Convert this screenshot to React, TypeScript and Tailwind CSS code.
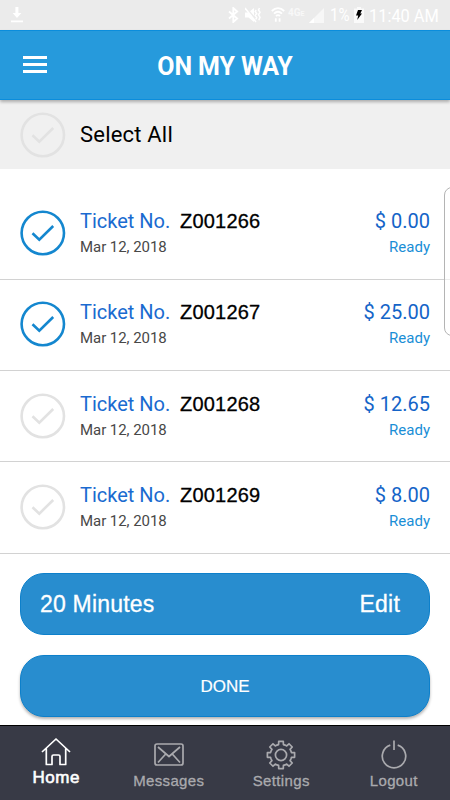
import type { ReactNode } from "react";

interface Ticket {
  id: string;
  amount: string;
  selected: boolean;
}

const tickets: Ticket[] = [
  { id: "Z001266", amount: "$ 0.00", selected: true },
  { id: "Z001267", amount: "$ 25.00", selected: true },
  { id: "Z001268", amount: "$ 12.65", selected: false },
  { id: "Z001269", amount: "$ 8.00", selected: false },
];

const helvetica = "font-['Liberation_Sans',Arial,sans-serif]";

function CheckCircle({ className }: { className: string }) {
  return (
    <svg
      className={`w-[46px] h-[46px] shrink-0 ${className}`}
      viewBox="0 0 46 46"
      fill="none"
      stroke="currentColor"
      strokeWidth="2.6"
    >
      <circle cx="22.8" cy="23" r="21.2" />
      <path d="M12.5 23.2l6.8 6.4L33.2 16" />
    </svg>
  );
}

function StatusBar() {
  return (
    <div className="h-[30px] bg-[#ebebeb] text-white flex items-center">
      <svg className="w-3 h-4 ml-[11px]" viewBox="0 0 12 16" fill="currentColor">
        <path d="M4.4 0h3v6h3L6 11 1.6 6h2.8zM0 13.5h12v1.7H0z" />
      </svg>
      <svg
        className="w-[11px] h-4 ml-[205px]"
        viewBox="0 0 11 16"
        fill="none"
        stroke="currentColor"
        strokeWidth="1.8"
      >
        <path d="M1 4.5l8.2 7L5.3 15V1l3.9 3.5-8.2 7" />
      </svg>
      <svg className="w-4 h-4 ml-[6px] shrink-0" viewBox="0 0 16 16" fill="none" stroke="currentColor">
        <path d="M0 5.5h3.5L9 1v14l-5.5-4.5H0z" fill="currentColor" stroke="none" />
        <path d="M1 1l11 13" stroke="#ebebeb" strokeWidth="2" />
        <path d="M0 1l11 14" strokeWidth="1.5" />
        <path d="M11.2 3l-1 1.5 1.5 2-1.5 2 1.5 2-1 2M14.5 1l-1 2 1.5 2.3-1.5 2.5 1.5 2.4-1.2 3" strokeWidth="1.5" />
      </svg>
      <svg className="w-[14px] h-4 ml-2.5 shrink-0" viewBox="0 0 14 16" fill="none" stroke="currentColor" strokeWidth="1.8">
        <path d="M.8 4c3.8-3.7 8.6-3.7 12.4 0M3 6.7c2.5-2.4 5.5-2.4 8 0M5 9c1.2-1.1 2.8-1.1 4 0" />
        <path d="M4.8 11.3v3.5M8.6 11.3v3.5" />
      </svg>
      <span className="ml-[3px] w-[18px] mb-1 text-[10px] leading-[10px] whitespace-nowrap font-bold text-[#f8f8f8]">
        4G<span className="text-[7px]">E</span>
      </span>
      <svg className="w-[15px] h-[15px] ml-[3px] shrink-0" viewBox="0 0 15 15">
        <path d="M0 15L15 0v15z" fill="#f7f7f7" />
        <path d="M0 15l5-5v5z" fill="#fff" />
      </svg>
      <span className="ml-[6px] w-[20px] text-[18px] leading-none whitespace-nowrap">
        <span className="inline-block origin-left scale-x-[0.84]">1%</span>
      </span>
      <svg className="w-[10px] h-4 ml-[4px] shrink-0" viewBox="0 0 10 16">
        <path d="M3 0h4v1.5h3V16H0V1.5h3z" fill="#fafafa" />
        <path d="M4 3h4L6.3 6.5H8L3.2 13l1-4.6H2z" fill="#000" />
      </svg>
      <span className="ml-[5px] mt-px text-[18px] leading-none whitespace-nowrap origin-left scale-x-[0.91]">
        11:40 AM
      </span>
    </div>
  );
}

function Header() {
  return (
    <header className="relative z-10 h-[70px] bg-[#269adc] border-y border-[#0b8ddc] shadow-[0_2px_3px_rgba(0,0,0,0.28)] grid grid-cols-[70px_1fr_70px] items-center">
      <div className="ml-[23px] -mt-px w-6 flex flex-col gap-1">
        <div className="h-[3px] bg-white" />
        <div className="h-[3px] bg-white" />
        <div className="h-[3px] bg-white" />
      </div>
      <h1 className="pt-[3px] text-center text-white font-bold text-[25px] leading-7 tracking-[-0.1px]">ON MY WAY</h1>
    </header>
  );
}

function TicketRow({ ticket }: { ticket: Ticket }) {
  return (
    <li className="h-[91.3px] border-b border-[#d2d2d2] flex items-center px-5 pb-[1.4px]">
      <CheckCircle className={ticket.selected ? "text-[#1487cf]" : "text-[#e2e2e2]"} />
      <div className="ml-[14px] flex-1">
        <div className="flex items-center h-7">
          <span className="w-[100px] text-[20px] text-[#1a6bd0]">Ticket No.</span>
          <span className={`${helvetica} text-[20px] text-black tracking-[0.2px] [-webkit-text-stroke:0.3px]`}>
            {ticket.id}
          </span>
        </div>
        <div className="h-6 leading-6 text-[15px] tracking-[-0.05px] text-[#484848]">Mar 12, 2018</div>
      </div>
      <div className="text-right">
        <div className="h-7 leading-7 text-[20px] text-[#1464c8]">{ticket.amount}</div>
        <div className="h-6 leading-6 text-[15px] text-[#1a8ed6]">Ready</div>
      </div>
    </li>
  );
}

// Outline of an eight-toothed gear centred on 15,15
function gearPath() {
  const steps = [
    [-22.5, 10.7],
    [-13, 10.7],
    [-9.5, 13.8],
    [9.5, 13.8],
    [13, 10.7],
  ];
  const points: string[] = [];
  for (let tooth = 0; tooth < 8; tooth++) {
    for (const [offset, r] of steps) {
      const a = ((tooth * 45 + offset) * Math.PI) / 180;
      points.push(`${(15 + r * Math.sin(a)).toFixed(2)} ${(15 - r * Math.cos(a)).toFixed(2)}`);
    }
  }
  return `M${points.join("L")}Z`;
}

function NavItem({ label, active = false, children }: { label: string; active?: boolean; children: ReactNode }) {
  return (
    <div className={`flex flex-col items-center ${active ? "text-white pt-3" : "text-[#aaaaae] pt-3.5"}`}>
      <svg
        className="w-[30px] h-[30px]"
        viewBox="0 0 30 30"
        fill="none"
        stroke="currentColor"
        strokeWidth="1.7"
        strokeLinejoin="round"
      >
        {children}
      </svg>
      <span
        className={`${helvetica} ${
          active
            ? "text-[17px] leading-5 tracking-[0.6px] [-webkit-text-stroke:0.6px]"
            : "mt-px text-[15px] leading-5 tracking-[0.35px] [-webkit-text-stroke:0.3px]"
        }`}
      >
        {label}
      </span>
    </div>
  );
}

function BottomNav() {
  return (
    <nav className="h-[75px] bg-[#383a46] border-t border-black grid grid-cols-4">
      <NavItem label="Home" active>
        <path d="M1 14L15 1l14 13M5.3 10.5v16H11v-8q0-1.5 1.5-1.5h5q1.5 0 1.5 1.5v8h5.7v-16" />
      </NavItem>
      <NavItem label="Messages">
        <rect x="1" y="4" width="28" height="21" rx="2" />
        <path d="M4 7l11 9.5L26 7M4 22.5l7.7-8.5M26 22.5L18.3 14" />
      </NavItem>
      <NavItem label="Settings">
        <path d={gearPath()} />
        <circle cx="15" cy="15" r="5.6" />
      </NavItem>
      <NavItem label="Logout">
        <path d="M11.3 5.1a11.7 11.7 0 1 0 7.4 0M15 .5v9.5" />
      </NavItem>
    </nav>
  );
}

export default function App() {
  return (
    <div className="relative w-[450px] h-[800px] overflow-hidden bg-white font-[Roboto,sans-serif] flex flex-col">
      <StatusBar />
      <Header />
      <div className="h-[69px] bg-[#f0f0f0] flex items-center pl-5">
        <CheckCircle className="text-[#e2e2e2]" />
        <span className="ml-[14px] text-[22px] tracking-[0.2px] text-black">Select All</span>
      </div>
      <ul className="mt-[19.6px]">
        {tickets.map((ticket) => (
          <TicketRow key={ticket.id} ticket={ticket} />
        ))}
      </ul>
      <div className={`${helvetica} flex-1 px-5 pt-[19px] flex flex-col gap-5 text-white`}>
        <div className="h-[62px] shrink-0 rounded-[24px] bg-[#288dcf] border border-[#0d80cb] px-[19px] flex items-center justify-between text-[23px] tracking-[0.2px] [-webkit-text-stroke:0.3px]">
          <span>20 Minutes</span>
          <span className="mr-[10px]">Edit</span>
        </div>
        <button className="h-[62px] shrink-0 pt-[2px] rounded-[24px] bg-[#288dcf] border border-[#0d80cb] shadow-[0_2px_3px_rgba(0,0,0,0.3)] text-[17px] [-webkit-text-stroke:0.2px]">
          DONE
        </button>
      </div>
      <BottomNav />
      {/* Edge panel handle */}
      <div className="absolute top-[187px] left-[444px] w-5 h-[149px] rounded-[8px] border border-[#b4b4b4] bg-white/60" />
    </div>
  );
}
